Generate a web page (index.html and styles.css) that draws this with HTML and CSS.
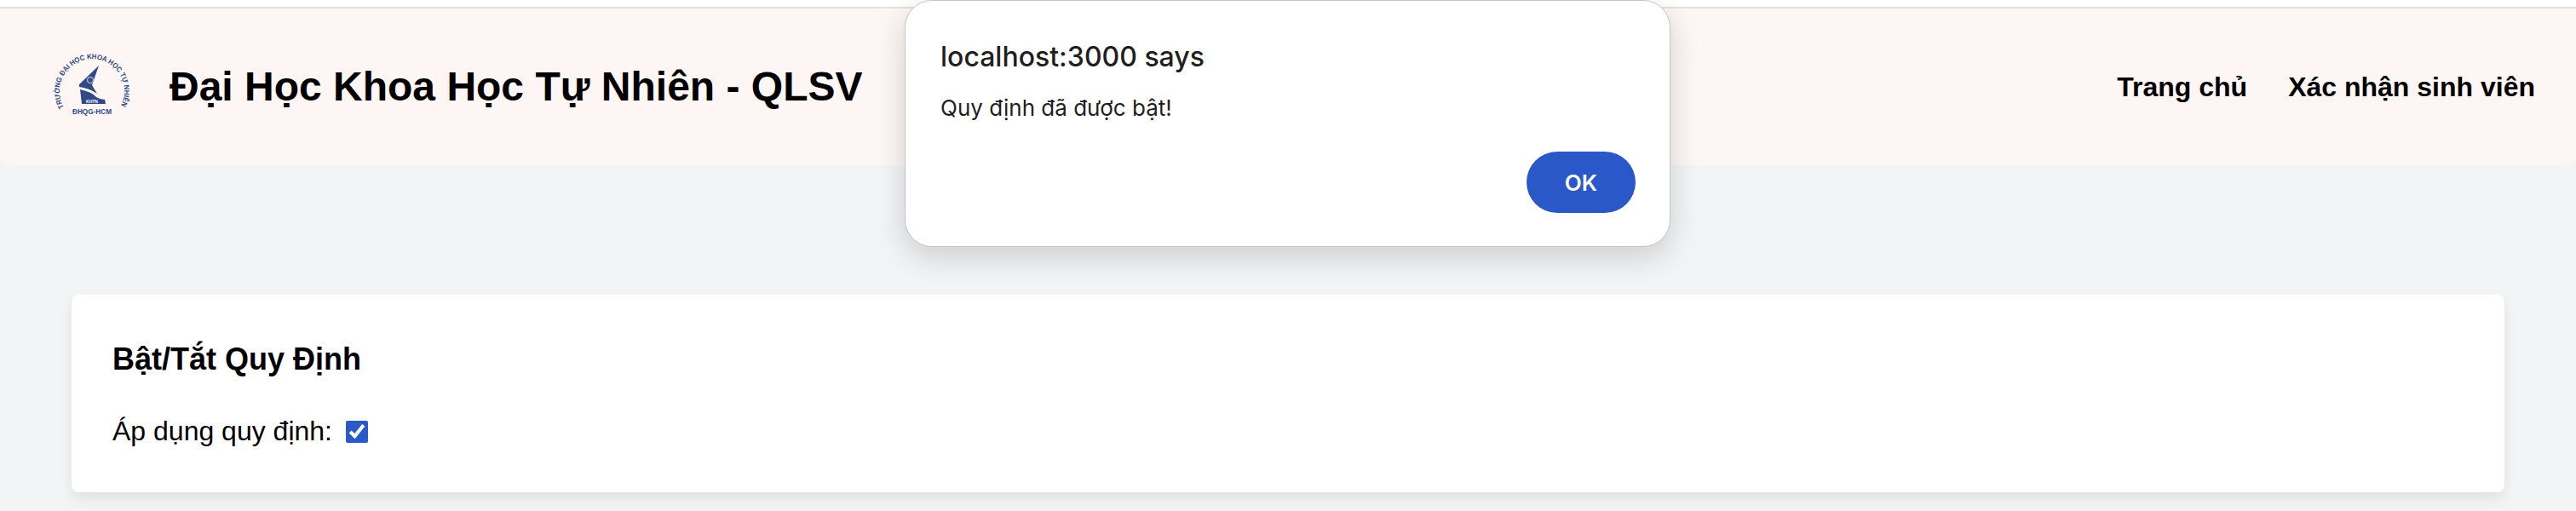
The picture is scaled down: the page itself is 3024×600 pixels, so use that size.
FILE: index.html
```html
<!DOCTYPE html>
<html lang="en">
<head>
  <meta charset="UTF-8" />
  <title>Đại Học Khoa Học Tự Nhiên - QLSV</title>
  <link rel="stylesheet" href="styles.css">
</head>
<body>

  <header class="navbar">
    <div class="brand">
      <svg class="logo" viewBox="0 0 100 100" width="100" height="100">
        <defs>
          <path id="logoArc" d="M17 74A38 38 0 1 1 83 74" />
        </defs>
        <text class="logo-ring"><textPath href="#logoArc" textLength="156" lengthAdjust="spacingAndGlyphs">TRƯỜNG ĐẠI HỌC KHOA HỌC TỰ NHIÊN</textPath></text>
        <path class="logo-fill" d="M58 25L35 47L35 50Q48 52 56 58L50 48Z" />
        <path class="logo-fill" d="M36 53Q50 56 55 62Q60 65 65 65L66 70H38Z" />
        <circle class="logo-atom" cx="48" cy="42" r="3.5" />
        <text class="logo-khtn" x="50" y="68.5" text-anchor="middle">KHTN</text>
        <text class="logo-dhqg" x="50" y="81.5" text-anchor="middle">ĐHQG-HCM</text>
      </svg>
      <h1>Đại Học Khoa Học Tự Nhiên - QLSV</h1>
    </div>
    <nav class="nav-links">
      <a href="#">Trang chủ</a>
      <a href="#">Xác nhận sinh viên</a>
    </nav>
  </header>

  <main class="content">
    <section class="card">
      <h2>Bật/Tắt Quy Định</h2>
      <label class="rule-toggle">
        Áp dụng quy định:
        <input type="checkbox" checked />
      </label>
    </section>
  </main>

  <div class="alert-box">
    <div class="alert-title">localhost:3000 says</div>
    <div class="alert-message">Quy định đã được bật!</div>
    <div class="alert-actions">
      <button class="alert-ok">OK</button>
    </div>
  </div>

</body>
</html>
```

FILE: styles.css
```css
* {
  box-sizing: border-box;
}
html, body {
  height: 100%;
}
body {
  margin: 0;
  overflow: hidden;
  background: #f3f4f6;
  color: #000;
  font-family: "Liberation Sans", Arial, sans-serif;
  display: flex;
  flex-direction: column;
  position: relative;
}
.navbar {
  margin-top: 8px;
  height: 186px;
  padding: 0 48px 0 58px;
  display: flex;
  align-items: center;
  justify-content: space-between;
  background: #fdf6f4;
  border-top: 2px solid #e1e2de;
  border-radius: 0 0 8px 8px;
  box-shadow: 0 -8px 0 #fff;
}
.brand {
  display: flex;
  align-items: center;
  gap: 41px;
}
.brand h1 {
  margin: 0 0 2px;
  font-size: 48px;
  font-weight: 700;
}
.logo {
  display: block;
}
.logo-ring {
  font-size: 8.5px;
  font-weight: 700;
  fill: #2f4a86;
}
.logo-fill {
  fill: #2f4a86;
}
.logo-atom {
  fill: none;
  stroke: #9aa8c8;
  stroke-width: 1.6;
}
.logo-khtn {
  font-size: 5px;
  font-weight: 700;
  fill: #fff;
}
.logo-dhqg {
  font-size: 8.2px;
  font-weight: 700;
  fill: #2f4a86;
}
.nav-links {
  display: flex;
  gap: 48px;
}
.nav-links a {
  color: #000;
  text-decoration: none;
  font-size: 32px;
  font-weight: 700;
}
.content {
  padding: 152px 84px 0;
}
.card {
  height: 232px;
  padding: 48px;
  background: #fff;
  border-radius: 8px;
  box-shadow: 0 8px 16px rgba(0, 0, 0, 0.08);
}
.card h2 {
  margin: 0 0 33px;
  font-size: 36px;
  line-height: 56px;
  font-weight: 700;
}
.rule-toggle {
  display: flex;
  align-items: center;
  gap: 16px;
  font-size: 32px;
  line-height: 47px;
}
.rule-toggle input {
  margin: 0;
  width: 26px;
  height: 26px;
  accent-color: #2a5ac8;
}
.alert-box {
  position: absolute;
  top: 0;
  left: 1062px;
  width: 899px;
  height: 290px;
  padding: 48px 40px 40px 41px;
  background: #fff;
  border: 1px solid #c4c4c4;
  border-radius: 32px;
  box-shadow: 0 12px 36px rgba(0, 0, 0, 0.16);
  font-family: Inter, "Noto Sans", sans-serif;
  color: #1f1f1f;
}
.alert-title {
  font-size: 32px;
  line-height: 36px;
  font-weight: 500;
}
.alert-message {
  margin-top: 26px;
  font-size: 26px;
  line-height: 32px;
}
.alert-actions {
  margin-top: 35px;
  display: flex;
  justify-content: flex-end;
}
.alert-ok {
  width: 128px;
  height: 72px;
  border: none;
  border-radius: 36px;
  background: #2a58c9;
  color: #fff;
  font-family: inherit;
  font-size: 26px;
  font-weight: 600;
}
```
